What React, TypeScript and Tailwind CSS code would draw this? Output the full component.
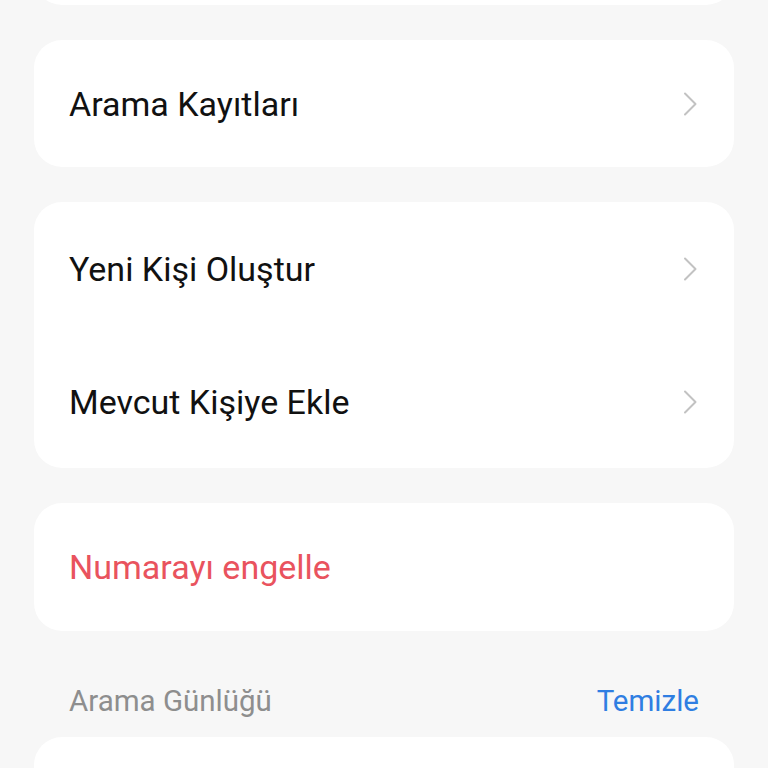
const font = { fontFamily: "Roboto, 'Noto Sans', sans-serif" };

function Chevron() {
  return (
    <svg width="15" height="24" viewBox="0 0 15 24" fill="none" className="text-[#c2c2c2]">
      <path d="M2 1.5 L12.5 12 L2 22.5" stroke="currentColor" strokeWidth="2" strokeLinecap="round" strokeLinejoin="round" />
    </svg>
  );
}

function Row({ label, red, chevron = true, h }: { label: string; red?: boolean; chevron?: boolean; h: string }) {
  return (
    <div className={`flex items-center justify-between pl-[35px] pr-[36px] ${h}`}>
      <span className={`text-[34px] leading-none ${red ? "text-[#e9535e]" : "text-[#111111]"}`}>{label}</span>
      {chevron && <Chevron />}
    </div>
  );
}

export default function App() {
  return (
    <div className="h-[768px] w-[768px] overflow-hidden bg-[#f7f7f7]" style={font}>
      <div className="flex flex-col gap-[35px] px-[34px]">
        <div className="-mt-[122px] h-[127px] rounded-[28px] bg-white" />
        <div className="rounded-[28px] bg-white">
          <Row label="Arama Kayıtları" h="h-[127px]" />
        </div>
        <div className="rounded-[28px] bg-white">
          <Row label="Yeni Kişi Oluştur" h="h-[133px]" />
          <Row label="Mevcut Kişiye Ekle" h="h-[133px]" />
        </div>
        <div className="rounded-[28px] bg-white">
          <Row label="Numarayı engelle" red chevron={false} h="h-[128px]" />
        </div>
      </div>
      <div className="flex h-[106px] items-center justify-between px-[69px] pt-[36px]">
        <span className="text-[29.5px] leading-none text-[#8e8e8e]">Arama Günlüğü</span>
        <span className="text-[29.5px] leading-none text-[#2f7ee2]">Temizle</span>
      </div>
      <div className="mx-[34px] h-[200px] rounded-[28px] bg-white" />
    </div>
  );
}
